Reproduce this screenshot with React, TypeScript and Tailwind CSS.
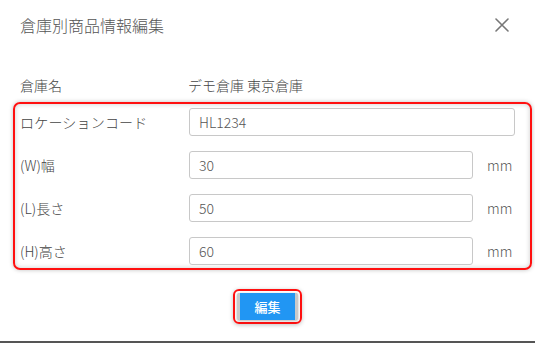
const rows = [
  { label: "(W)幅", value: "30" },
  { label: "(L)長さ", value: "50" },
  { label: "(H)高さ", value: "60" },
];

const CloseIcon = () => (
  <svg width="14" height="14" viewBox="0 0 14 14" aria-label="閉じる">
    <path d="M1 1L13 13M13 1L1 13" stroke="#777" strokeWidth="1.6" strokeLinecap="round" />
  </svg>
);

export default function App() {
  return (
    <div className="w-[535px] h-[343px] bg-white flex flex-col font-['Noto_Sans_CJK_JP','Noto_Sans',sans-serif] font-light text-[#444]">
      <header className="h-[50px] flex items-center justify-between pl-5 pr-[26px]">
        <h1 className="text-[16px] text-[#555] leading-none -mt-px">倉庫別商品情報編集</h1>
        <button className="flex items-center justify-center">
          <CloseIcon />
        </button>
      </header>

      <div className="mt-[25px] h-5 flex items-center text-sm">
        <span className="w-[188px] pl-5">倉庫名</span>
        <span>デモ倉庫 東京倉庫</span>
      </div>

      {/* highlighted form area */}
      <div className="mt-[7px] ml-[13px] w-[519px] border-2 border-[#ff1010] rounded-[7px] pt-1 pb-[3px] flex flex-col gap-[15px] text-sm shadow-[0_0_4px_rgba(0,0,0,0.25),inset_0_0_5px_rgba(0,0,0,0.2)]">
        <div className="h-[28px] flex items-center">
          <span className="w-[174px] pl-[5px] tracking-[0.2px]">ロケーションコード</span>
          <input
            readOnly
            value="HL1234"
            className="w-[326px] h-[28px] border border-[#c8c8c8] rounded-[3px] px-[9px] text-sm text-[#555] outline-none"
          />
        </div>
        {rows.map((r) => (
          <div key={r.label} className="h-[28px] flex items-center">
            <span className="w-[174px] pl-[5px]">{r.label}</span>
            <input
              readOnly
              value={r.value}
              className="w-[284px] h-[28px] border border-[#c8c8c8] rounded-[3px] px-[9px] text-sm text-[#555] outline-none"
            />
            <span className="ml-[14px] text-[#555]">mm</span>
          </div>
        ))}
      </div>

      <div className="mt-[19px] flex justify-center">
        <div className="border-2 border-[#ff1010] rounded-[6px] p-[2px] shadow-[0_1px_4px_rgba(0,0,0,0.25)]">
          <button className="w-[61px] h-[27px] bg-[#2196f3] border-x-[3px] border-[#c9c9c9] rounded-[2px] text-white text-[13px] font-medium shadow-[0_1px_3px_rgba(0,0,0,0.3)]">
            編集
          </button>
        </div>
      </div>

      <div className="mt-auto h-[2px] bg-[#555]" />
    </div>
  );
}
